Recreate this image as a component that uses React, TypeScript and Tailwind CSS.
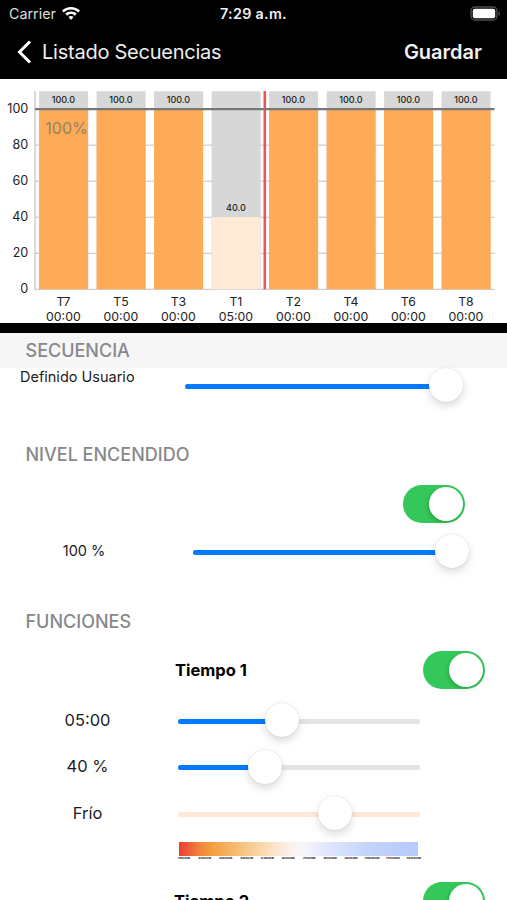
import { useState } from 'react';

interface Bar {
  name: string;
  time: string;
  value: number;
  color: string;
}

const bars: Bar[] = [
  { name: 'T7', time: '00:00', value: 100, color: '#ffaa57' },
  { name: 'T5', time: '00:00', value: 100, color: '#ffaa57' },
  { name: 'T3', time: '00:00', value: 100, color: '#ffaa57' },
  { name: 'T1', time: '05:00', value: 40, color: '#ffe9d7' },
  { name: 'T2', time: '00:00', value: 100, color: '#ffaa57' },
  { name: 'T4', time: '00:00', value: 100, color: '#ffaa57' },
  { name: 'T6', time: '00:00', value: 100, color: '#ffaa57' },
  { name: 'T8', time: '00:00', value: 100, color: '#ffaa57' },
];

const ticks = [0, 20, 40, 60, 80, 100];

const kelvins = Array.from({ length: 12 }, (_, i) => `${(i + 1) * 1000}K`);

// chart area starts right below the nav bar
const yFor = (value: number) => 210.3 - value * 1.802;

function SequenceChart() {
  return (
    <svg width="507" height="244" viewBox="0 0 507 244" className="block shrink-0 bg-white">
      {ticks.map((t) => (
        <g key={t}>
          <line x1="35" x2="494.5" y1={yFor(t)} y2={yFor(t)} stroke="#c4c0c2" strokeWidth="1" />
          <text x="28.3" y={yFor(t) + 4} textAnchor="end" fontSize="12.6" fill="#222">
            {t}
          </text>
        </g>
      ))}
      <line x1="35" x2="35" y1="12" y2="210.8" stroke="#b5b5b5" strokeWidth="1" />
      {bars.map((b, i) => {
        const x = 39.1 + i * 57.5;
        const top = yFor(b.value);
        return (
          <g key={b.name} textAnchor="middle">
            <rect x={x} y="12.3" width="49" height="198" fill="#d7d7d7" />
            <rect x={x} y={top} width="49" height={210.3 - top} fill={b.color} />
            <text x={x + 24.3} y={top - 6.6} fontSize="9" fontWeight="500" fill="#222">
              {b.value.toFixed(1)}
            </text>
            <text x={x + 24.3} y="227" fontSize="12.3" fill="#222">
              {b.name}
            </text>
            <text x={x + 24.3} y="241.8" fontSize="12.3" fill="#222">
              {b.time}
            </text>
          </g>
        );
      })}
      <line x1="264.8" x2="264.8" y1="12" y2="210.3" stroke="#e95656" strokeWidth="2.6" />
      <line x1="35" x2="494.5" y1={yFor(100)} y2={yFor(100)} stroke="#777" strokeWidth="2.2" />
      <text x="45.3" y="54.5" fontSize="16" fill="#958065">
        100%
      </text>
    </svg>
  );
}

function Toggle({ initial = true }: { initial?: boolean }) {
  const [on, setOn] = useState(initial);
  return (
    <button
      type="button"
      onClick={() => setOn(!on)}
      className={`flex h-[38px] w-[62px] shrink-0 items-center rounded-full p-[2px] ${on ? 'justify-end bg-[#34c759]' : 'justify-start bg-[#e9e9eb]'}`}
    >
      <span className="size-[34px] rounded-full bg-white shadow-[-1px_2px_4px_rgba(0,0,0,0.18)]" />
    </button>
  );
}

interface SliderProps {
  thumb: number;
  fill?: string;
  rest?: string;
}

function Slider({ thumb, fill = 'bg-[#007aff]', rest = 'bg-[#e4e4e4]' }: SliderProps) {
  return (
    <div className="relative flex h-[34px] w-full items-center">
      <div className={`mt-[2px] flex h-[5px] w-full overflow-hidden rounded-full ${rest}`}>
        <div className={`h-full ${fill}`} style={{ width: thumb }} />
      </div>
      <span
        className="absolute top-0 size-[34px] rounded-full bg-white shadow-[0_0_1px_rgba(0,0,0,0.2),0_4px_9px_rgba(0,0,0,0.15)]"
        style={{ left: thumb - 17 }}
      />
    </div>
  );
}

function SectionTitle({ title }: { title: string }) {
  return <h2 className="pl-[25.5px] text-[18px] font-medium leading-[36px] text-[#88888b]">{title}</h2>;
}

function FunctionRow({ label, children }: { label: string; children: React.ReactNode }) {
  return (
    <div className="flex h-[46.5px] items-center">
      <span className="w-[175px] text-center text-[16.5px]">{label}</span>
      <div className="ml-[3px] w-[242px]">{children}</div>
    </div>
  );
}

function ColorScale() {
  return (
    <div className="ml-[179px] w-[243px]">
      <div className="h-[14.5px] w-[239px] bg-[linear-gradient(90deg,#ee3a33_0%,#f0813c_8%,#f3a03f_14%,#f6c27e_26%,#fae0c0_38%,#fbf1ea_46%,#f7f5fc_52%,#dfe6fb_63%,#c5d5fa_78%,#b5cafa_100%)]" />
      <svg width="246" height="4" viewBox="0 0 246 4" className="-ml-px block">
        {kelvins.map((k, i) => (
          <text
            key={k}
            x={6 + i * 20.9}
            y="5"
            transform="scale(1 0.62)"
            textAnchor="middle"
            fontSize="4"
            fontWeight="700"
            fill="#111"
          >
            {k}
          </text>
        ))}
      </svg>
    </div>
  );
}

export default function App() {
  return (
    <div className="flex h-[900px] w-[507px] flex-col overflow-hidden bg-white font-['Inter',sans-serif] text-[#1c1c1e]">
      <header className="h-[79px] shrink-0 bg-black text-white">
        <div className="grid h-[27px] grid-cols-3 items-center pl-[9px] pr-[6px] text-[14.3px]">
          <div className="flex items-center gap-[6px] text-[#ddd]">
            <span>Carrier</span>
            <svg width="18" height="14" viewBox="0 0 18 14" fill="#fff">
              <path d="M9 0C5.6 0 2.4 1.3 0 3.6l1.8 1.9C3.7 3.6 6.2 2.6 9 2.6s5.3 1 7.2 2.9L18 3.6C15.6 1.3 12.4 0 9 0Z" />
              <path d="M9 4.5c-2.2 0-4.2.9-5.7 2.3l1.9 1.9C6.2 7.7 7.5 7.1 9 7.1s2.8.6 3.8 1.6l1.9-1.9C13.2 5.4 11.2 4.5 9 4.5Z" />
              <path d="M9 9c-1 0-1.9.4-2.5 1L9 13l2.5-3C10.9 9.4 10 9 9 9Z" />
            </svg>
          </div>
          <span className="-ml-[3px] text-center font-semibold tracking-[0.3px] text-[#eee]">7:29 a.m.</span>
          <svg width="31" height="15" viewBox="0 0 31 15" className="justify-self-end">
            <rect x="1" y="1" width="26" height="13" rx="4" fill="none" stroke="#4d4d4d" strokeWidth="1.4" />
            <rect x="2.8" y="2.8" width="22.4" height="9.4" rx="2" fill="#fff" />
            <path d="M28.5 5.2v4.6c1-.4 1.5-1.3 1.5-2.3s-.5-1.9-1.5-2.3Z" fill="#4d4d4d" />
          </svg>
        </div>
        <div className="flex h-[50px] items-center justify-between pl-[17px] pr-[25px]">
          <button type="button" className="flex items-center gap-[10px] text-[20px] tracking-[-0.24px] text-[#eee]">
            <svg width="15" height="24" viewBox="0 0 15 24" fill="none" stroke="#fff" strokeWidth="3">
              <path d="M13 1.5 2.5 12 13 22.5" />
            </svg>
            Listado Secuencias
          </button>
          <button type="button" className="text-[20px] font-semibold text-[#f2f2f2]">
            Guardar
          </button>
        </div>
      </header>

      <SequenceChart />
      <div className="h-[10px] shrink-0 bg-black" />

      <section className="h-[87px] shrink-0">
        <div className="h-[35px] bg-[#f6f6f6]">
          <SectionTitle title="SECUENCIA" />
        </div>
        <div className="flex">
          <span className="ml-[20px] w-[165px] text-[14.5px] leading-[17px]">Definido Usuario</span>
          <div className="w-[278px]">
            <Slider thumb={261} />
          </div>
        </div>
      </section>

      <section className="h-[184px] shrink-0 pt-[17px]">
        <SectionTitle title="NIVEL ENCENDIDO" />
        <div className="mt-[12px] flex justify-end pr-[42px]">
          <Toggle />
        </div>
        <div className="mt-[11px] flex items-center">
          <span className="w-[168px] text-center text-[14.5px]">100 %</span>
          <div className="ml-[25px] w-[276px]">
            <Slider thumb={258.5} />
          </div>
        </div>
      </section>

      <section className="shrink-0">
        <SectionTitle title="FUNCIONES" />
        <div className="mt-[11px] flex items-center justify-between pl-[175px] pr-[22px]">
          <h3 className="text-[16.5px] font-bold text-black">Tiempo 1</h3>
          <Toggle />
        </div>
        <div className="mt-[8px]">
          <FunctionRow label="05:00">
            <Slider thumb={103.5} />
          </FunctionRow>
          <FunctionRow label="40 %">
            <Slider thumb={86.5} />
          </FunctionRow>
          <FunctionRow label="Frío">
            <Slider thumb={157} fill="bg-[#ffe8d5]" rest="bg-[#ffe8d5]" />
          </FunctionRow>
        </div>
        <div className="mt-[5px]">
          <ColorScale />
        </div>
        <div className="mt-[22px] flex items-center justify-between pl-[174px] pr-[22px]">
          <h3 className="text-[16.5px] font-bold text-black">Tiempo 2</h3>
          <Toggle />
        </div>
      </section>
    </div>
  );
}
